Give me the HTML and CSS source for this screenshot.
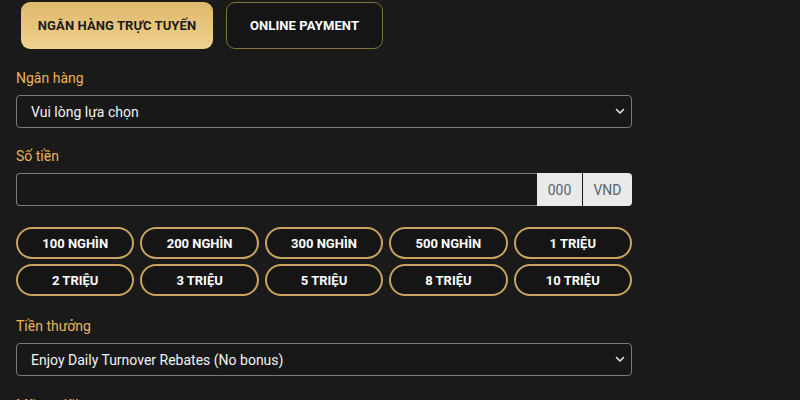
FILE: index.html
```html
<!DOCTYPE html>
<html lang="vi">
<head>
<meta charset="utf-8">
<link rel="stylesheet" href="styles.css">
</head>
<body>
<div class="page">
  <div class="tabs">
    <button class="tab tab-active">NGÂN HÀNG TRỰC TUYẾN</button>
    <button class="tab">ONLINE PAYMENT</button>
  </div>

  <div class="field">
    <div class="label">Ngân hàng</div>
    <div class="select">
      <span>Vui lòng lựa chọn</span>
      <svg class="chev" width="10" height="7" viewBox="0 0 10 7"><path d="M1.5 1.5 L5 5 L8.5 1.5" fill="none" stroke="#e6e6e6" stroke-width="1.6" stroke-linecap="round" stroke-linejoin="round"/></svg>
    </div>
  </div>

  <div class="field field-amount">
    <div class="label">Số tiền</div>
    <div class="input-group">
      <div class="input"></div>
      <div class="addon">000</div>
      <div class="addon">VND</div>
    </div>
  </div>

  <div class="amounts">
    <button class="amt">100 NGHÌN</button>
    <button class="amt">200 NGHÌN</button>
    <button class="amt">300 NGHÌN</button>
    <button class="amt">500 NGHÌN</button>
    <button class="amt">1 TRIỆU</button>
    <button class="amt">2 TRIỆU</button>
    <button class="amt">3 TRIỆU</button>
    <button class="amt">5 TRIỆU</button>
    <button class="amt">8 TRIỆU</button>
    <button class="amt">10 TRIỆU</button>
  </div>

  <div class="field field-bonus">
    <div class="label">Tiền thưởng</div>
    <div class="select">
      <span>Enjoy Daily Turnover Rebates (No bonus)</span>
      <svg class="chev" width="10" height="7" viewBox="0 0 10 7"><path d="M1.5 1.5 L5 5 L8.5 1.5" fill="none" stroke="#e6e6e6" stroke-width="1.6" stroke-linecap="round" stroke-linejoin="round"/></svg>
    </div>
  </div>

  <div class="field">
    <div class="label">Mã ưu đãi</div>
  </div>
</div>
</body>
</html>
```

FILE: styles.css
```css
* { box-sizing: border-box; }
html, body {
  margin: 0;
  padding: 0;
  background: #1a1a1a;
  height: 400px;
  overflow: hidden;
}
body {
  font-family: Roboto, "Liberation Sans", Arial, sans-serif;
  color: #ffffff;
}
.page {
  width: 616px;
  margin-left: 16px;
  padding-top: 2px;
}
.tabs {
  display: flex;
  gap: 13px;
  padding-left: 5px;
}
.tab {
  height: 47px;
  border-radius: 9px;
  font-family: Roboto, "Liberation Sans", Arial, sans-serif;
  font-weight: 700;
  font-size: 13px;
  letter-spacing: 0.1px;
  background: #151515;
  color: #ffffff;
  border: 1px solid #84703f;
  width: 157px;
  padding: 0;
}
.tab-active {
  width: 192px;
  border: none;
  color: #1a1a1a;
  background: linear-gradient(180deg, #dfb86c 0%, #efd18e 100%);
}
.field {
  margin-top: 19px;
}
.field-amount {
  margin-top: 18px;
}
.label {
  color: #e9b457;
  font-size: 14px;
  line-height: 20px;
  margin-bottom: 7px;
}
.select {
  height: 33px;
  border: 1px solid #7b7b7b;
  border-radius: 4px;
  background: #181818;
  display: flex;
  align-items: center;
  justify-content: space-between;
  padding: 0 6px 0 14px;
  font-size: 14px;
  color: #f2f2f2;
}
.input-group {
  display: flex;
  height: 33px;
}
.input {
  flex: 1;
  border: 1px solid #7b7b7b;
  border-right: none;
  border-radius: 4px 0 0 4px;
  background: #181818;
}
.addon {
  background: #e9eaec;
  color: #626262;
  font-size: 14px;
  display: flex;
  align-items: center;
  justify-content: center;
  width: 45px;
}
.addon + .addon {
  margin-left: 1px;
  width: 49px;
  border-radius: 0 4px 4px 0;
}
.amounts {
  margin-top: 21px;
  display: grid;
  grid-template-columns: repeat(5, 1fr);
  column-gap: 6px;
  row-gap: 5px;
}
.amt {
  height: 32px;
  border: 2px solid #c9a45e;
  border-radius: 16px;
  background: #151515;
  color: #ffffff;
  font-family: Roboto, "Liberation Sans", Arial, sans-serif;
  font-weight: 700;
  font-size: 13px;
  padding: 0;
}
.field-bonus {
  margin-top: 20px;
}
```
